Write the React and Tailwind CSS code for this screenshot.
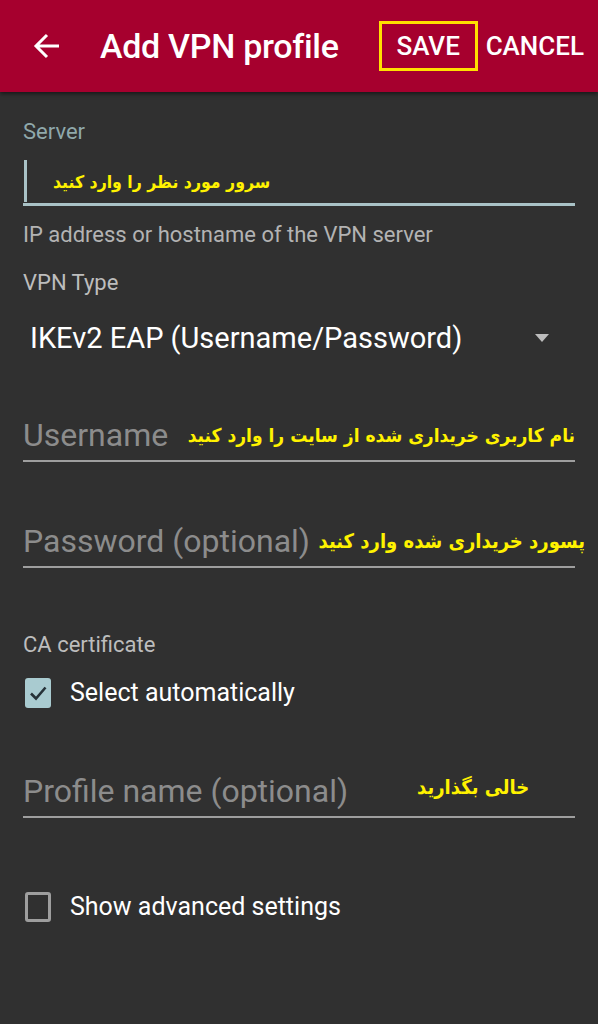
import React from 'react';

const roboto = { fontFamily: 'Roboto, "Liberation Sans", sans-serif' };

const Note = ({ children, className = '' }) => (
  <span
    dir="rtl"
    className={`font-bold text-[#fff200] whitespace-nowrap ${className}`}
    style={{ fontFamily: '"DejaVu Sans Condensed", "DejaVu Sans", sans-serif' }}
  >
    {children}
  </span>
);

const Check = ({ checked }) =>
  checked ? (
    <div className="w-[26px] h-[30px] rounded-[3px] bg-[#a9cbd0] flex items-center justify-center">
      <svg width="20" height="18" viewBox="0 0 20 18" fill="none">
        <path d="M3 9.5l5 5L17.5 3.5" stroke="#263238" strokeWidth="2.6" />
      </svg>
    </div>
  ) : (
    <div className="w-[26px] h-[30px] rounded-[3px] border-[3px] border-[#9e9e9e]" />
  );

const App = () => {
  return (
    <div className="w-[598px] h-[1024px] bg-[#303030] overflow-hidden" style={roboto}>
      {/* toolbar */}
      <div className="h-[92px] bg-[#a6002e] flex items-center shadow-[0_2px_4px_rgba(0,0,0,0.5)] relative">
        <svg className="ml-[33px]" width="28" height="26" viewBox="0 0 28 26" fill="none">
          <path d="M26 13H3M14 2L3 13l11 11" stroke="#fff" strokeWidth="3" />
        </svg>
        <div className="ml-[39px] text-white text-[34px] font-medium tracking-[-0.3px]">Add VPN profile</div>
        <div className="ml-auto flex items-center mr-[14px]">
          <div className="w-[99px] h-[50px] border-[3px] border-[#ffe000] flex items-center justify-center text-white text-[26px] font-medium">
            SAVE
          </div>
          <div className="ml-[8px] text-white text-[26px] font-medium">CANCEL</div>
        </div>
      </div>

      <div className="px-[23px]">
        {/* server */}
        <div className="pt-[27px] text-[22px] leading-[26px] text-[#8fa8ab]">Server</div>
        <div className="mt-[13px] h-[48px] border-b-[3px] border-[#a9c2c6] flex items-center">
          <div className="w-[3px] h-[42px] bg-[#a9c2c6] ml-[1px]" />
          <Note className="ml-[26px] mt-[4px] text-[17.5px]">سرور مورد نظر را وارد کنید</Note>
        </div>
        <div className="mt-[16px] text-[22px] leading-[26px] text-[#b3b3b3]">IP address or hostname of the VPN server</div>

        {/* type */}
        <div className="mt-[22px] text-[22px] leading-[26px] text-[#bdbdbd]">VPN Type</div>
        <div className="mt-[25px] flex items-center pl-[7px] pr-[26px]">
          <span className="text-white text-[29px] leading-[34px]">IKEv2 EAP (Username/Password)</span>
          <svg className="ml-auto" width="14" height="8" viewBox="0 0 14 8">
            <path d="M0 0h14L7 8z" fill="#bdbdbd" />
          </svg>
        </div>

        {/* username */}
        <div className="mt-[61px] border-b-2 border-[#9e9e9e] flex items-center pb-[6px]">
          <span className="text-[32px] leading-[38px] text-[#8c8c8c]">Username</span>
          <Note className="ml-auto text-[19px]">نام کاربری خریداری شده از سایت را وارد کنید</Note>
        </div>

        {/* password */}
        <div className="mt-[60px] border-b-2 border-[#9e9e9e] flex items-center pb-[6px]">
          <span className="text-[32px] leading-[38px] text-[#8c8c8c]">Password (optional)</span>
          <Note className="ml-auto -mr-[10px] text-[20px]">پسورد خریداری شده وارد کنید</Note>
        </div>

        {/* ca */}
        <div className="mt-[64px] text-[22px] leading-[26px] text-[#bdbdbd]">CA certificate</div>
        <div className="mt-[20px] flex items-center pl-[2px]">
          <Check checked />
          <span className="ml-[19px] text-white text-[25px] leading-[30px]">Select automatically</span>
        </div>

        {/* profile name */}
        <div className="mt-[64px] border-b-2 border-[#9e9e9e] flex items-center pb-[6px]">
          <span className="text-[32px] leading-[38px] text-[#8c8c8c]">Profile name (optional)</span>
          <Note className="ml-[69px] text-[20px] mb-[8px]">خالی بگذارید</Note>
        </div>

        {/* advanced */}
        <div className="mt-[74px] flex items-center pl-[2px]">
          <Check />
          <span className="ml-[19px] text-white text-[25px] leading-[30px]">Show advanced settings</span>
        </div>
      </div>
    </div>
  );
};

export default App;
